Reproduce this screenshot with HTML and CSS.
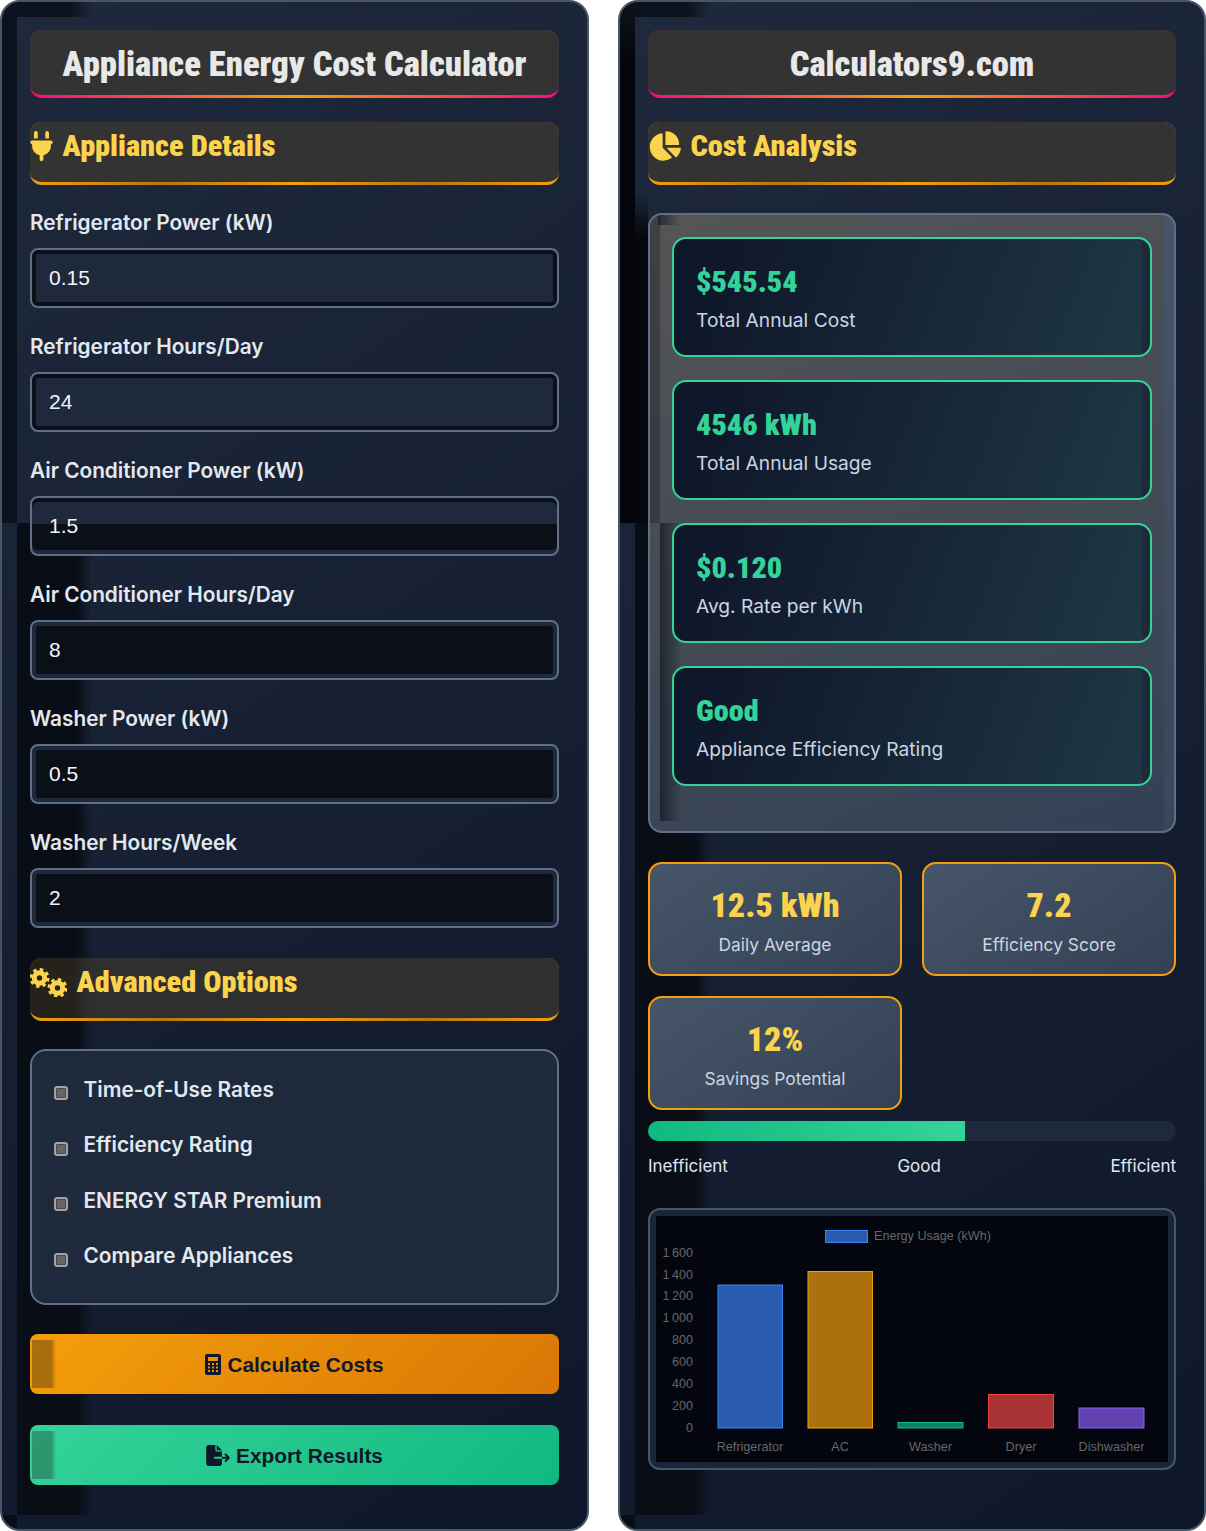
FILE: index.html
```html
<!DOCTYPE html>
<html lang="en">
<head>
    <meta charset="UTF-8">
    <title>Appliance Energy Cost Calculator</title>
    <link rel="stylesheet" href="styles.css">
</head>
<body>
<div class="layout">
    <div class="panel">
        <h1 class="title">Appliance Energy Cost Calculator</h1>
        <h2 class="section">
            <svg class="section-icon" width="23" height="30" viewBox="0 0 384 512"><path d="M96 0C78.3 0 64 14.3 64 32v96h64V32c0-17.7-14.3-32-32-32zM288 0c-17.7 0-32 14.3-32 32v96h64V32c0-17.7-14.3-32-32-32zM32 160c-17.7 0-32 14.3-32 32s14.3 32 32 32v32c0 77.4 55 142 128 156.8V480c0 17.7 14.3 32 32 32s32-14.3 32-32V412.8C297 398 352 333.4 352 256V224c17.7 0 32-14.3 32-32s-14.3-32-32-32H32z"/></svg>
            Appliance Details
        </h2>
        <div class="field">
            <label>Refrigerator Power (kW)</label>
            <input type="text" value="0.15">
        </div>
        <div class="field">
            <label>Refrigerator Hours/Day</label>
            <input type="text" value="24">
        </div>
        <div class="field">
            <label>Air Conditioner Power (kW)</label>
            <input class="split" type="text" value="1.5">
        </div>
        <div class="field">
            <label>Air Conditioner Hours/Day</label>
            <input class="dark" type="text" value="8">
        </div>
        <div class="field">
            <label>Washer Power (kW)</label>
            <input class="dark" type="text" value="0.5">
        </div>
        <div class="field">
            <label>Washer Hours/Week</label>
            <input class="dark" type="text" value="2">
        </div>
        <h2 class="section section-lower">
            <svg class="section-icon" width="37" height="30" viewBox="0 0 37 30">
                <circle class="gear-body" cx="9.5" cy="11" r="5.2"/>
                <circle class="gear-teeth" cx="9.5" cy="11" r="8.5"/>
                <circle class="gear-body" cx="27.5" cy="21" r="5.2"/>
                <circle class="gear-teeth" cx="27.5" cy="21" r="8.5"/>
            </svg>
            Advanced Options
        </h2>
        <div class="options">
            <div class="option"><span class="check"></span>Time-of-Use Rates</div>
            <div class="option"><span class="check"></span>Efficiency Rating</div>
            <div class="option"><span class="check"></span>ENERGY STAR Premium</div>
            <div class="option"><span class="check"></span>Compare Appliances</div>
        </div>
        <button class="btn btn-calc">
            <svg width="16" height="21" viewBox="0 0 16 21"><path fill-rule="evenodd" d="M2 0h12a2 2 0 0 1 2 2v17a2 2 0 0 1-2 2H2a2 2 0 0 1-2-2V2a2 2 0 0 1 2-2zM3 3v4h10V3zM3 9v2h2V9zM7 9v2h2V9zM11 9v2h2V9zM3 12.5v2h2v-2zM7 12.5v2h2v-2zM11 12.5v2h2v-2zM3 16v2h2v-2zM7 16v2h2v-2zM11 16v2h2v-2z"/></svg>
            Calculate Costs
        </button>
        <button class="btn btn-export">
            <svg width="24" height="21" viewBox="0 0 576 512"><path d="M0 64C0 28.7 28.7 0 64 0H224V128c0 17.7 14.3 32 32 32H384V288H216c-13.3 0-24 10.7-24 24s10.7 24 24 24H384V448c0 35.3-28.7 64-64 64H64c-35.3 0-64-28.7-64-64V64zM384 336V288H494.1l-39-39c-9.4-9.4-9.4-24.6 0-33.9s24.6-9.4 33.9 0l80 80c9.4 9.4 9.4 24.6 0 33.9l-80 80c-9.4 9.4-24.6 9.4-33.9 0s-9.4-24.6 0-33.9l39-39H384zm0-208H256V0L384 128z"/></svg>
            Export Results
        </button>
    </div>

    <div class="panel panel-right">
        <h1 class="title">Calculators9.com</h1>
        <h2 class="section">
            <svg class="section-icon" width="33" height="30" viewBox="0 0 576 512"><path d="M304 240V16.6c0-9 7-16.6 16-16.6C443.7 0 544 100.3 544 224c0 9-7.6 16-16.6 16H304zM32 272C32 150.7 122.1 50.3 239 34.3c9.2-1.3 17 6.1 17 15.4V288L412.5 444.5c6.7 6.7 6.2 17.7-1.5 23.1C371.8 495.6 323.8 512 272 512C139.5 512 32 404.6 32 272zm526.4 16c9.3 0 16.6 7.8 15.4 17c-7.7 55.9-34.6 105.6-73.9 142.3c-6 5.6-15.4 5.2-21.2-.7L320 288H558.4z"/></svg>
            Cost Analysis
        </h2>
        <div class="results">
            <div class="card">
                <div class="card-value">$545.54</div>
                <div class="card-label">Total Annual Cost</div>
            </div>
            <div class="card">
                <div class="card-value">4546 kWh</div>
                <div class="card-label">Total Annual Usage</div>
            </div>
            <div class="card">
                <div class="card-value">$0.120</div>
                <div class="card-label">Avg. Rate per kWh</div>
            </div>
            <div class="card">
                <div class="card-value">Good</div>
                <div class="card-label">Appliance Efficiency Rating</div>
            </div>
        </div>
        <div class="stats">
            <div class="stat">
                <div class="stat-value">12.5 kWh</div>
                <div class="stat-label">Daily Average</div>
            </div>
            <div class="stat">
                <div class="stat-value">7.2</div>
                <div class="stat-label">Efficiency Score</div>
            </div>
            <div class="stat">
                <div class="stat-value">12%</div>
                <div class="stat-label">Savings Potential</div>
            </div>
        </div>
        <div class="meter"><div class="meter-fill" style="width: 60%"></div></div>
        <div class="meter-labels">
            <span>Inefficient</span>
            <span>Good</span>
            <span>Efficient</span>
        </div>
        <div class="chart">
            <svg class="chart-svg" width="512" height="246" viewBox="656 1216 512 246">
                <rect class="bar-blue" x="825.5" y="1230.5" width="42" height="12"/>
                <text x="874" y="1240">Energy Usage (kWh)</text>
                <g text-anchor="end">
                    <text x="693" y="1257">1&#8239;600</text>
                    <text x="693" y="1279">1&#8239;400</text>
                    <text x="693" y="1300">1&#8239;200</text>
                    <text x="693" y="1322">1&#8239;000</text>
                    <text x="693" y="1344">800</text>
                    <text x="693" y="1366">600</text>
                    <text x="693" y="1388">400</text>
                    <text x="693" y="1410">200</text>
                    <text x="693" y="1432">0</text>
                </g>
                <rect class="bar-blue" x="718" y="1285" width="64.5" height="143"/>
                <rect class="bar-orange" x="808" y="1271.5" width="64.5" height="156.5"/>
                <rect class="bar-green" x="898" y="1422.5" width="65" height="5.5"/>
                <rect class="bar-red" x="988.5" y="1394.5" width="65" height="33.5"/>
                <rect class="bar-purple" x="1079" y="1408" width="65" height="20"/>
                <g text-anchor="middle">
                    <text x="750" y="1451">Refrigerator</text>
                    <text x="840" y="1451">AC</text>
                    <text x="930.5" y="1451">Washer</text>
                    <text x="1021" y="1451">Dryer</text>
                    <text x="1111.5" y="1451">Dishwasher</text>
                </g>
            </svg>
        </div>
    </div>
</div>
</body>
</html>
```

FILE: styles.css
```css
* {
    box-sizing: border-box;
}
body {
    margin: 0;
    background-color: #fff;
    font-family: Inter, sans-serif;
}
.layout {
    display: grid;
    grid-template-columns: 589px 588px;
    gap: 29px;
    height: 1531px;
}
.panel {
    border: 2px solid #475569;
    border-radius: 20px;
    padding: 28px;
    background-color: #1e293b;
    background-image:
        linear-gradient(90deg, #0c121c, #0c121c 70%, transparent),
        linear-gradient(#0d131e, #0d131e),
        linear-gradient(#090d15, #090d15),
        linear-gradient(90deg, #090d15, #090d15 80%, transparent),
        linear-gradient(145deg, #1e293b, #0f172a);
    background-position: 15px 0, 0 0, 0 1513px, 15px 521px, 0 0;
    background-size: 75px 15px, 15px 521px, 15px 15px, 75px 992px, 100% 100%;
    background-repeat: no-repeat;
}
.panel-right {
    background-image:
        linear-gradient(90deg, #0c121c, #0c121c 70%, transparent),
        linear-gradient(#0d131e, #03050a 12%),
        linear-gradient(transparent, #05070c 14%),
        linear-gradient(#090d15, #090d15),
        linear-gradient(90deg, #090d15, #090d15 80%, transparent),
        linear-gradient(145deg, #1e293b, #0f172a);
    background-position: 15px 0, 0 0, 15px 190px, 0 1513px, 15px 521px, 0 0;
    background-size: 75px 15px, 15px 521px, 13px 331px, 15px 15px, 75px 992px, 100% 100%;
}

/* headings */
.title {
    margin: 0 0 24px;
    padding: 13px 0 10px;
    border-bottom: 3px solid transparent;
    border-radius: 12px;
    background:
        linear-gradient(#333, #333) padding-box,
        linear-gradient(90deg, #ff0a78, #f59e0b, #ff0a78) border-box;
    color: #e8e8e8;
    font-family: Roboto, sans-serif;
    font-stretch: 75%;
    font-size: 34.6px;
    font-weight: 900;
    line-height: 42px;
    text-align: center;
}
.section {
    display: flex;
    align-items: center;
    gap: 9.5px;
    margin: 0 0 24px;
    padding: 6px 0 18px;
    border-bottom: 3px solid transparent;
    border-radius: 12px;
    background:
        linear-gradient(#333, #333) padding-box,
        linear-gradient(90deg, #f59e0b, #b7770f 25%, #f59e0b 50%, #b7770f 75%, #f59e0b) border-box;
    color: #fcd34d;
    font-family: Roboto, sans-serif;
    font-stretch: 75%;
    font-size: 30.3px;
    font-weight: 900;
    line-height: 36px;
}
.section-lower {
    margin-top: 30px;
    background:
        linear-gradient(90deg, rgba(25, 18, 5, 0.45), rgba(25, 18, 5, 0.45) 70%, transparent) 0 0 / 60px 100% no-repeat padding-box,
        linear-gradient(#2f2f2f, #2f2f2f) padding-box,
        linear-gradient(90deg, #f59e0b, #b7770f 25%, #f59e0b 50%, #b7770f 75%, #f59e0b) border-box;
}
.section-icon {
    fill: #fcd34d;
    flex: none;
}
.gear-body {
    fill: none;
    stroke: #fcd34d;
    stroke-width: 5;
}
.gear-teeth {
    fill: none;
    stroke: #fcd34d;
    stroke-width: 3;
    stroke-dasharray: 3.4 3.28;
}

/* form */
.field {
    margin-bottom: 25px;
}
.field label {
    display: block;
    margin-bottom: 12px;
    color: #e2e8f0;
    font-size: 20.8px;
    font-weight: 600;
    line-height: 27px;
}
.field input {
    display: block;
    width: 100%;
    height: 60px;
    padding: 0 17px;
    border: 2px solid #5f6f88;
    border-radius: 8px;
    outline: none;
    background-color: #1e293b;
    box-shadow: inset 0 0 0 4px #0b1018;
    color: #f1f5f9;
    font-family: "Liberation Sans", Arial, sans-serif;
    font-size: 21px;
}
.field input.split {
    background-image: linear-gradient(#1e293b 47%, #0b1018 47%);
    box-shadow: inset 0 4px 0 #0b1018, inset 0 -4px 0 #1e293b;
}
.field input.dark {
    background-color: #0b1018;
    box-shadow: inset 0 0 0 4px #1e293b;
}
.options {
    margin: 28px 0 29px;
    padding: 24.5px 22px 33.5px;
    border: 2px solid #5f6f88;
    border-radius: 16px;
    background-color: #1e293b;
}
.option {
    display: flex;
    align-items: center;
    height: 27px;
    margin-bottom: 28.67px;
    color: #e2e8f0;
    font-size: 20.8px;
    font-weight: 600;
}
.option:last-child {
    margin-bottom: 0;
}
.check {
    flex: none;
    width: 14px;
    height: 14px;
    margin: 8px 15.5px 0 0;
    border: 2px solid #a3a3a3;
    border-radius: 3px;
    background-color: #666;
    box-shadow: inset 0 0 0 1px #4a4a4a;
}
.btn {
    display: flex;
    align-items: center;
    justify-content: center;
    gap: 6px;
    width: 100%;
    height: 60px;
    padding: 2px 0 0;
    border: 0;
    border-radius: 8px;
    color: #0f172a;
    fill: #0f172a;
    font-family: "Liberation Sans", Arial, sans-serif;
    font-size: 20.8px;
    font-weight: 700;
}
.btn-calc {
    margin-bottom: 31px;
    background:
        linear-gradient(90deg, rgba(60, 40, 20, 0.4), rgba(60, 40, 20, 0.4) 80%, transparent) 2px 6px / 24px 48px no-repeat,
        linear-gradient(135deg, #f59e0b, #d97706);
}
.btn-export {
    background:
        linear-gradient(90deg, rgba(40, 60, 50, 0.4), rgba(40, 60, 50, 0.4) 80%, transparent) 2px 6px / 24px 48px no-repeat,
        linear-gradient(135deg, #34d399, #10b981);
}

/* results */
.results {
    margin: 28px 0 29px;
    padding: 22px 22px 45px;
    border: 2px solid #5f6f88;
    border-radius: 14px;
    background:
        linear-gradient(90deg, rgba(10, 14, 22, 0.6), transparent) 8px 0 / 22px 10px no-repeat,
        linear-gradient(rgba(10, 14, 22, 0.3), rgba(10, 14, 22, 0.3)) 0 0 / 10px 308px no-repeat,
        linear-gradient(90deg, rgba(10, 14, 22, 0.6), transparent) 10px 308px / 22px 298px no-repeat,
        linear-gradient(#47556a, #3a475a) right 0 top 0 / 10px 100% no-repeat,
        linear-gradient(160deg, #555, #334155);
}
.card {
    height: 120px;
    margin-bottom: 23px;
    padding: 24px 22px 0;
    border: 2px solid #34d399;
    border-radius: 14px;
    background:
        linear-gradient(#1e293b, #1e293b) right 0 top 0 / 8px 100% no-repeat,
        linear-gradient(110deg, #0f172a 8%, #1f3844);
}
.card:last-child {
    margin-bottom: 0;
}
.card-value {
    color: #34d399;
    font-family: Roboto, sans-serif;
    font-stretch: 75%;
    font-size: 30.2px;
    font-weight: 900;
    line-height: 38px;
}
.card-label {
    margin-top: 6px;
    color: #cbd5e1;
    font-size: 19.2px;
    line-height: 26px;
}
.stats {
    display: grid;
    grid-template-columns: 1fr 1fr;
    gap: 20px;
}
.stat {
    height: 114px;
    padding-top: 21px;
    border: 2px solid #f59e0b;
    border-radius: 14px;
    background: linear-gradient(145deg, #475569, #334155);
    text-align: center;
}
.stat-value {
    color: #fcd34d;
    font-family: Roboto, sans-serif;
    font-stretch: 75%;
    font-size: 34px;
    font-weight: 900;
    line-height: 40px;
}
.stat-label {
    margin-top: 8px;
    color: #cbd5e1;
    font-size: 17.4px;
    line-height: 24px;
}
.meter {
    height: 20px;
    margin-top: 11px;
    border-radius: 10px;
    background-color: #1e293b;
    overflow: hidden;
}
.meter-fill {
    height: 100%;
    background: linear-gradient(90deg, #10b981, #34d399);
}
.meter-labels {
    display: flex;
    justify-content: space-between;
    margin-top: 14px;
    color: #e2e8f0;
    font-size: 17px;
    line-height: 22px;
}
.chart {
    height: 262px;
    margin-top: 31px;
    padding: 6px;
    border: 2px solid #475569;
    border-radius: 12px;
    background-color: #1a2538;
}
.chart-svg {
    display: block;
    background-color: #03060f;
}
.chart-svg text {
    fill: #666;
    font-family: "Liberation Sans", Arial, sans-serif;
    font-size: 12.6px;
}
.bar-blue {
    fill: rgba(59, 130, 246, 0.7);
    stroke: #3b82f6;
}
.bar-orange {
    fill: rgba(245, 158, 11, 0.7);
    stroke: #f59e0b;
}
.bar-green {
    fill: rgba(16, 185, 129, 0.7);
    stroke: #10b981;
}
.bar-red {
    fill: rgba(239, 68, 68, 0.7);
    stroke: #ef4444;
}
.bar-purple {
    fill: rgba(139, 92, 246, 0.7);
    stroke: #8b5cf6;
}
```
